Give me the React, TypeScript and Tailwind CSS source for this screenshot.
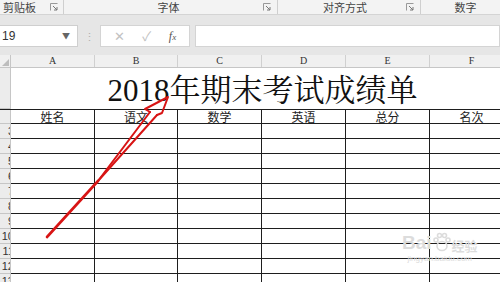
import React from "react"

const cols = ["A", "B", "C", "D", "E", "F"]
const heads = ["姓名", "语文", "数学", "英语", "总分", "名次"]
const rowNums = [3, 4, 5, 6, 7, 8, 9, 10, 11, 12, 13]
const grid = "grid grid-cols-[11px_84px_83px_84px_84px_84px_84px]"

function Launcher() {
  return (
    <svg width="8" height="8" viewBox="0 0 8 8" className="shrink-0">
      <path d="M0.5 7.5V0.5H7.5" stroke="#999" fill="none" />
      <path d="M3 3L7 7M7 4V7H4" stroke="#777" fill="none" />
    </svg>
  )
}

function RowHead({ n }: { n?: number }) {
  return (
    <div className="bg-[#ececec] border-r border-b border-[#c6c6c6] overflow-hidden flex justify-end items-center">
      {n !== undefined && (
        <span className="text-[11px] leading-none text-[#333] [font-family:'Liberation_Sans',sans-serif] mr-[-4px]">{n}</span>
      )}
    </div>
  )
}

function Paw() {
  return (
    <svg width="18" height="20" viewBox="0 0 18 20" className="mx-[1px]">
      <g fill="none" stroke="#dcdcdc" strokeWidth="1.6">
        <ellipse cx="9" cy="14" rx="5" ry="4.5" />
        <circle cx="3" cy="8" r="2" />
        <circle cx="15" cy="8" r="2" />
        <circle cx="6.5" cy="3.5" r="2" />
        <circle cx="11.5" cy="3.5" r="2" />
      </g>
    </svg>
  )
}

export default function App() {
  return (
    <div className="relative w-[500px] h-[282px] overflow-hidden bg-[#e6e6e6] [font-family:'Noto_Sans_CJK_SC',sans-serif]">
      {/* ribbon group labels */}
      <div className="h-[15px] bg-[#f3f3f3] border-b border-[#d4d4d4] flex items-center text-[11px] leading-none text-[#444]">
        <div className="w-[64px] flex items-center justify-between pl-[3px] pr-[5px] border-r border-[#cfcfcf] h-full">
          <span>剪贴板</span>
          <Launcher />
        </div>
        <div className="w-[214px] flex items-center pr-[6px] border-r border-[#cfcfcf] h-full">
          <span className="flex-1 text-center pl-[10px]">字体</span>
          <Launcher />
        </div>
        <div className="w-[143px] flex items-center pr-[6px] border-r border-[#cfcfcf] h-full">
          <span className="flex-1 text-center pl-[6px]">对齐方式</span>
          <Launcher />
        </div>
        <div className="flex-1 text-center pl-[10px]">数字</div>
      </div>

      {/* formula bar */}
      <div className="h-[10px]" />
      <div className="h-[22px] flex items-stretch">
        <div className="w-[78px] bg-white border-y border-r border-[#cfcfcf] flex items-center justify-between pl-[2px] pr-[7px]">
          <span className="text-[12px] text-[#333] [font-family:'Liberation_Sans',sans-serif]">19</span>
          <span className="text-[8px] text-[#666]">▼</span>
        </div>
        <div className="w-[22px] flex items-center justify-center text-[#b0b0b0] text-[11px]">⋮</div>
        <div className="w-[90px] bg-white border border-[#d4d4d4] flex items-center justify-around px-[4px]">
          <span className="text-[13px] text-[#c2c2c2]">✕</span>
          <span className="text-[13px] text-[#c2c2c2]">✓</span>
          <span className="text-[12px] italic text-[#555] [font-family:'Liberation_Serif',serif]">
            f<span className="text-[9px]">x</span>
          </span>
        </div>
        <div className="w-[5px]" />
        <div className="flex-1 bg-white border border-[#d4d4d4]" />
      </div>
      <div className="h-[8px]" />

      {/* sheet */}
      <div className="bg-white">
        {/* column headers */}
        <div className={`${grid} h-[13px] bg-[#f0f0f0] border-b border-[#c6c6c6]`}>
          <div className="border-r border-[#c6c6c6] flex items-end justify-end p-[1px]">
            <svg width="7" height="7" viewBox="0 0 7 7">
              <path d="M7 0V7H0Z" fill="#bdbdbd" />
            </svg>
          </div>
          {cols.map((c) => (
            <div key={c} className="border-r border-[#d0d0d0] flex items-center justify-center text-[10px] leading-none text-[#333] [font-family:'Liberation_Serif',serif]">
              {c}
            </div>
          ))}
        </div>

        {/* title row */}
        <div className={`${grid} h-[41px]`}>
          <RowHead />
          <div className="col-span-6 relative">
            <div className="absolute left-0 w-[503px] top-0 h-full flex items-center justify-center pt-[3px] text-[31px] leading-none text-[#111] [font-family:'Liberation_Serif','Noto_Serif_CJK_SC','Noto_Sans_CJK_SC',serif]">
              2018年期末考试成绩单
            </div>
          </div>
        </div>

        {/* header row */}
        <div className={`${grid} h-[15px] border-t border-[#1e1e1e]`}>
          <RowHead />
          {heads.map((h) => (
            <div key={h} className="border-r border-b border-[#1e1e1e] flex items-center justify-center text-[12px] leading-none text-[#222]">
              {h}
            </div>
          ))}
        </div>

        {rowNums.map((n) => (
          <div key={n} className={`${grid} h-[15px]`}>
            <RowHead n={n} />
            {cols.map((c) => (
              <div key={c} className="border-r border-b border-[#1e1e1e]" />
            ))}
          </div>
        ))}
      </div>

      {/* watermark */}
      <div className="absolute left-[402px] top-[232px] flex flex-col items-center text-[#dcdcdc] select-none">
        <div className="flex items-end leading-none">
          <span className="text-[19px] font-bold [font-family:'Liberation_Sans',sans-serif]">Bai</span>
          <Paw />
          <span className="text-[13px] font-bold">经验</span>
        </div>
        <span className="text-[8px] leading-none mt-[3px] [font-family:'Liberation_Sans',sans-serif]">jingyan.baidu.com</span>
      </div>

      {/* red arrow */}
      <svg className="absolute left-0 top-0 pointer-events-none" width="500" height="282" viewBox="0 0 500 282">
        <g stroke="#d81414" strokeWidth="2" fill="none" strokeLinecap="round" strokeLinejoin="round">
          <path d="M47 237L98 181" strokeWidth="2.6" />
          <path d="M98 181L150 112" />
          <path d="M98 181L157 115" />
          <path d="M150 112L145 109L168 97L162 113L157 115" />
        </g>
      </svg>
    </div>
  )
}
